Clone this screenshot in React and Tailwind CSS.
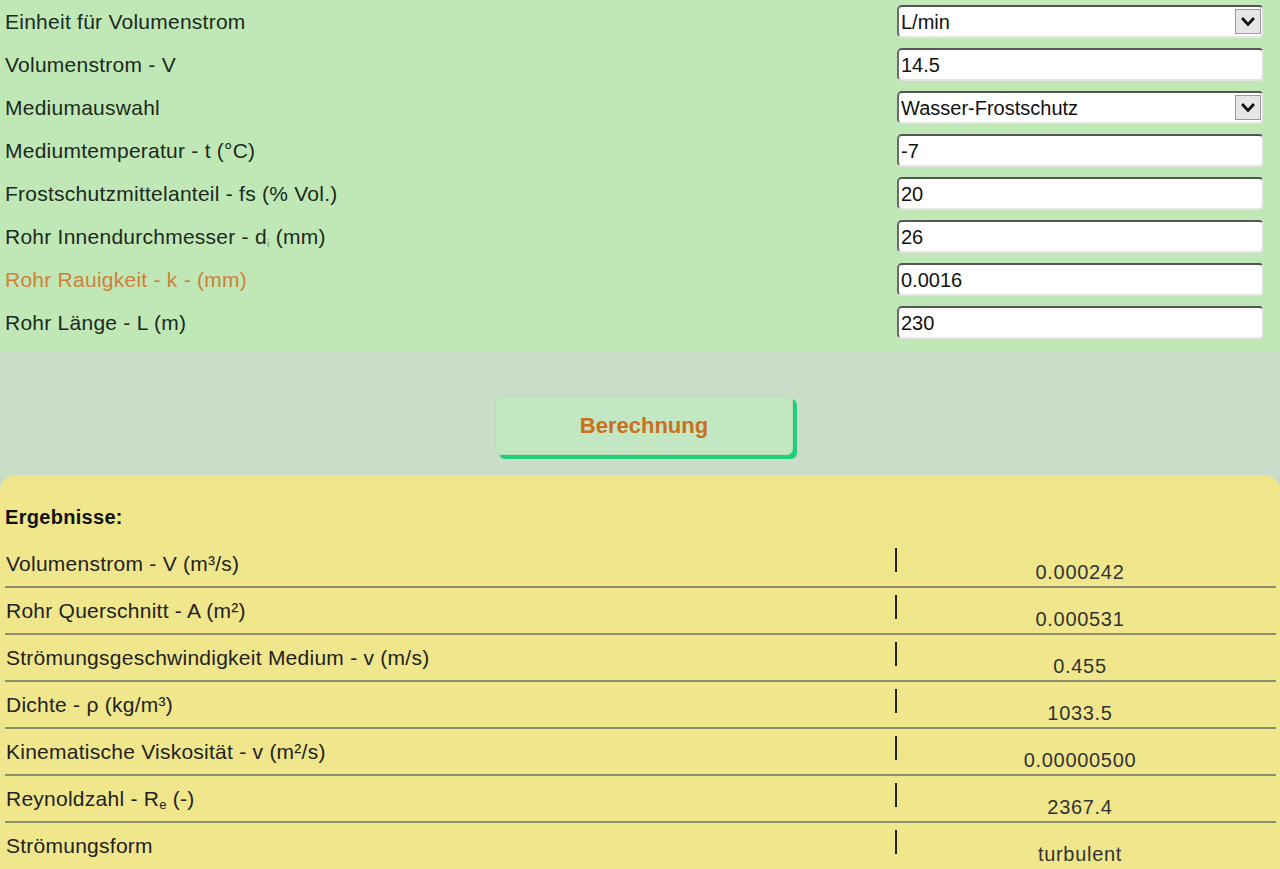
import { useState } from 'react';

const font = { fontFamily: '"Liberation Sans", Arial, sans-serif' };

function Chevron() {
  return (
    <svg viewBox="0 0 14 10" className="w-[14px] h-[10px]">
      <path d="M2 2 L7 7.5 L12 2" fill="none" stroke="#111" strokeWidth="2.8" strokeLinecap="square" />
    </svg>
  );
}

function Field({ value, select }) {
  return (
    <div className="relative w-[367px] h-[33px] bg-white rounded-[5px] border-2 border-t-[#555] border-l-[#6a6a6a] border-r-[#dcdcdc] border-b-[#e4e4e4] flex items-center">
      <span className="pl-[2px] text-[20px] text-[#111] leading-none">{value}</span>
      {select && (
        <div className="absolute right-[1px] top-[2px] w-[26px] h-[25px] bg-[#e6e6e6] border border-[#9a9a9a] flex items-center justify-center">
          <Chevron />
        </div>
      )}
    </div>
  );
}

const inputs = [
  { label: 'Einheit für Volumenstrom', value: 'L/min', select: true },
  { label: 'Volumenstrom - V', value: '14.5' },
  { label: 'Mediumauswahl', value: 'Wasser-Frostschutz', select: true },
  { label: 'Mediumtemperatur - t (°C)', value: '-7' },
  { label: 'Frostschutzmittelanteil - fs (% Vol.)', value: '20' },
  { label: <>Rohr Innendurchmesser - d<sub className="text-[11px] text-[#6aa66a]">i</sub> (mm)</>, value: '26' },
  { label: 'Rohr Rauigkeit - k - (mm)', value: '0.0016', orange: true },
  { label: 'Rohr Länge - L (m)', value: '230' },
];

const results = [
  { label: 'Volumenstrom - V (m³/s)', value: '0.000242' },
  { label: 'Rohr Querschnitt - A (m²)', value: '0.000531' },
  { label: 'Strömungsgeschwindigkeit Medium - v (m/s)', value: '0.455' },
  { label: 'Dichte - ρ (kg/m³)', value: '1033.5' },
  { label: 'Kinematische Viskosität - v (m²/s)', value: '0.00000500' },
  { label: <>Reynoldzahl - R<sub className="text-[13px]">e</sub> (-)</>, value: '2367.4' },
  { label: 'Strömungsform', value: 'turbulent', last: true },
];

export default function App() {
  const [rows] = useState(inputs);

  return (
    <div style={font} className="w-[1280px] h-[869px] overflow-hidden bg-[#c9ddc8]">
      {/* Eingaben */}
      <div className="bg-[#bfe8b6] pb-[8px]">
        {rows.map((r, i) => (
          <div key={i} className="h-[43px] flex items-center">
            <div className={`w-[897px] pl-[5px] text-[21px] tracking-[0.25px] ${r.orange ? 'text-[#d0803c]' : 'text-[#1c2a1c]'}`}>
              {r.label}
            </div>
            <Field value={r.value} select={r.select} />
          </div>
        ))}
      </div>

      {/* Button */}
      <div className="flex justify-center pl-[8px] pt-[43px] pb-[20px]">
        <button className="w-[298px] h-[60px] bg-[#c4e7c3] border border-[#b9dcb8] rounded-[6px] shadow-[4px_4px_0_#1fcf7a] text-[22px] font-bold text-[#c8701e]">
          Berechnung
        </button>
      </div>

      {/* Ergebnisse */}
      <div className="bg-[#f0e68c] rounded-t-[16px] pt-[30px] h-[394px]">
        <div className="pl-[5px] text-[20px] tracking-[0.3px] font-bold leading-[24px] text-[#111]">Ergebnisse:</div>
        <div className="mt-[12px] ml-[5px] mr-[4px]">
          {results.map((r, i) => (
            <div key={i} className={`h-[47px] flex ${r.last ? '' : 'border-b-2 border-[#8e8c6e]'}`}>
              <div className="w-[890px] pl-[1px] pt-[11px] text-[21px] tracking-[0.25px] leading-[24px] text-[#222]">{r.label}</div>
              <div className="w-[2px] h-[24px] mt-[7px] bg-[#222]" />
              <div className="w-[366px] pt-[19px] text-center text-[20px] tracking-[0.7px] leading-[24px] text-[#333]">{r.value}</div>
            </div>
          ))}
        </div>
      </div>
    </div>
  );
}
